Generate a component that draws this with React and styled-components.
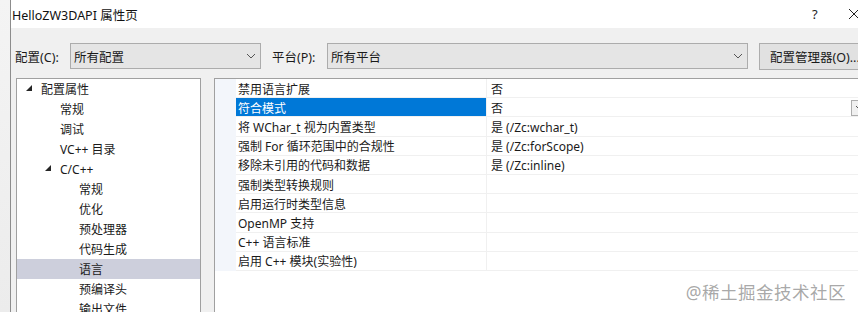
import React from 'react';
import styled, { createGlobalStyle } from 'styled-components';

const GlobalStyle = createGlobalStyle`
    html, body {
        margin: 0;
        padding: 0;
        width: 858px;
        height: 312px;
        overflow: hidden;
        background: #f0f0f0;
    }
    * {
        box-sizing: border-box;
    }
`;

const FONT = `"Noto Sans", "Noto Sans CJK SC", sans-serif`;

const treeItems = [
    { label: '配置属性', level: 0, open: true },
    { label: '常规', level: 1 },
    { label: '调试', level: 1 },
    { label: 'VC++ 目录', level: 1 },
    { label: 'C/C++', level: 1, open: true },
    { label: '常规', level: 2 },
    { label: '优化', level: 2 },
    { label: '预处理器', level: 2 },
    { label: '代码生成', level: 2 },
    { label: '语言', level: 2, selected: true },
    { label: '预编译头', level: 2 },
    { label: '输出文件', level: 2 },
];

const props = [
    { name: '禁用语言扩展', value: '否' },
    { name: '符合模式', value: '否', selected: true },
    { name: '将 WChar_t 视为内置类型', value: '是 (/Zc:wchar_t)' },
    { name: '强制 For 循环范围中的合规性', value: '是 (/Zc:forScope)' },
    { name: '移除未引用的代码和数据', value: '是 (/Zc:inline)' },
    { name: '强制类型转换规则', value: '' },
    { name: '启用运行时类型信息', value: '' },
    { name: 'OpenMP 支持', value: '' },
    { name: 'C++ 语言标准', value: '' },
    { name: '启用 C++ 模块(实验性)', value: '' },
];

const Chevron = () => (
    <svg width="10" height="6" viewBox="0 0 10 6">
        <path d="M1 1 L5 5 L9 1" fill="none" stroke="#555" strokeWidth="1" />
    </svg>
);

const Expander = () => (
    <svg width="7" height="7" viewBox="0 0 7 7">
        <polygon points="6,0 6,6 0,6" fill="#262626" />
    </svg>
);

export default function App() {
    return (
        <>
            <GlobalStyle />
            <Screen>
                <BackStrip />
                <Dialog>
                    <TitleBar>
                        <Title>HelloZW3DAPI 属性页</Title>
                        <Help>?</Help>
                        <CloseIcon>
                            <svg width="12" height="12" viewBox="0 0 12 12">
                                <path d="M1 1 L11 11 M11 1 L1 11" stroke="#222" strokeWidth="1" />
                            </svg>
                        </CloseIcon>
                    </TitleBar>
                    <Body>
                        <ConfigRow>
                            <Label>配置(C):</Label>
                            <Select width={191}>
                                <span>所有配置</span>
                                <Chevron />
                            </Select>
                            <Label gap={11}>平台(P):</Label>
                            <Select width={421}>
                                <span>所有平台</span>
                                <Chevron />
                            </Select>
                            <ManagerButton>配置管理器(O)...</ManagerButton>
                        </ConfigRow>
                        <Panels>
                            <Tree>
                                {treeItems.map((item, i) => (
                                    <TreeRow key={i} level={item.level} selected={item.selected}>
                                        <ExpanderSlot>{item.open && <Expander />}</ExpanderSlot>
                                        {item.label}
                                    </TreeRow>
                                ))}
                            </Tree>
                            <Grid>
                                {props.map((p, i) => (
                                    <GridRow key={i}>
                                        <Gutter />
                                        <NameCell selected={p.selected}>{p.name}</NameCell>
                                        <ValueCell>
                                            {p.value}
                                            {p.selected && (
                                                <DropButton>
                                                    <Chevron />
                                                </DropButton>
                                            )}
                                        </ValueCell>
                                    </GridRow>
                                ))}
                            </Grid>
                        </Panels>
                        <Watermark>@稀土掘金技术社区</Watermark>
                    </Body>
                </Dialog>
            </Screen>
        </>
    );
}

const Screen = styled.div`
    display: flex;
    width: 858px;
    height: 312px;
    overflow: hidden;
    font-family: ${FONT};
    font-size: 12px;
    color: #1a1a1a;
`;

const BackStrip = styled.div`
    width: 11px;
    flex-shrink: 0;
    background: linear-gradient(to bottom, #f4f4f4, #ececec);
    border-right: 1px solid #8c8c8c;
`;

const Dialog = styled.div`
    flex: 1;
    display: flex;
    flex-direction: column;
    min-width: 0;
`;

const TitleBar = styled.div`
    height: 28px;
    background: #ffffff;
    display: flex;
    align-items: center;
    padding-left: 1px;
`;

const Title = styled.div`
    flex: 1;
    font-size: 12.5px;
    color: #111;
`;

const Help = styled.div`
    width: 20px;
    font-size: 13px;
    color: #222;
    margin-right: 16px;
`;

const CloseIcon = styled.div`
    width: 12px;
    display: flex;
    align-items: center;
    margin-right: -2px;
`;

const Body = styled.div`
    flex: 1;
    position: relative;
    background: #f0f0f0;
    padding: 15px 0 0 4px;
    overflow: hidden;
`;

const ConfigRow = styled.div`
    display: flex;
    align-items: center;
    height: 26px;
    white-space: nowrap;
`;

const Label = styled.div`
    width: 55px;
    flex-shrink: 0;
    margin-left: ${(p) => p.gap || 0}px;
    font-size: 12.5px;
`;

const Select = styled.div`
    width: ${(p) => p.width}px;
    height: 26px;
    flex-shrink: 0;
    background: #e5e5e5;
    border: 1px solid #acacac;
    display: flex;
    align-items: center;
    justify-content: space-between;
    padding: 0 4px 0 3px;
    font-size: 12.5px;
`;

const ManagerButton = styled.div`
    margin-left: 11px;
    height: 27px;
    width: 110px;
    flex-shrink: 0;
    background: #e1e1e1;
    border: 1px solid #adadad;
    display: flex;
    align-items: center;
    padding-left: 10px;
    font-size: 12.5px;
`;

const Panels = styled.div`
    display: flex;
    margin-top: 9px;
    margin-left: 1px;
    gap: 13px;
    align-items: flex-start;
`;

const Tree = styled.div`
    width: 185px;
    height: 260px;
    flex-shrink: 0;
    background: #ffffff;
    border: 1px solid #a0a0a0;
    border-bottom: none;
`;

const TreeRow = styled.div`
    height: 20px;
    display: flex;
    align-items: center;
    padding-left: ${(p) => 9 + p.level * 19}px;
    background: ${(p) => (p.selected ? '#cdcfdc' : 'transparent')};
`;

const ExpanderSlot = styled.span`
    width: 15px;
    display: inline-flex;
    align-items: center;
    justify-content: flex-start;
    margin-top: -2px;
`;

const Grid = styled.div`
    width: 680px;
    height: 260px;
    flex-shrink: 0;
    background: #ffffff;
    border-top: 1px solid #a0a0a0;
    border-left: 1px solid #a0a0a0;
`;

const GridRow = styled.div`
    display: flex;
    height: 19.2px;
`;

const Gutter = styled.div`
    width: 21px;
    background: #f3f6fb;
`;

const NameCell = styled.div`
    width: 251px;
    padding: 1px 0 0 2px;
    display: flex;
    align-items: center;
    border-bottom: 1px solid #f0f0f0;
    border-right: 1px solid #f0f0f0;
    background: ${(p) => (p.selected ? '#0078d7' : '#ffffff')};
    color: ${(p) => (p.selected ? '#ffffff' : '#1a1a1a')};
    white-space: nowrap;
`;

const ValueCell = styled.div`
    flex: 1;
    position: relative;
    padding: 1px 0 0 4px;
    display: flex;
    align-items: center;
    border-bottom: 1px solid #f0f0f0;
    white-space: nowrap;
`;

const DropButton = styled.div`
    position: absolute;
    left: 364px;
    top: 2px;
    width: 18px;
    height: 16px;
    background: #f0f0f0;
    border: 1px solid #adadad;
    display: flex;
    align-items: center;
    justify-content: center;
`;

const Watermark = styled.div`
    position: absolute;
    right: 12px;
    bottom: 8px;
    font-size: 17.5px;
    color: rgba(130, 130, 130, 0.7);
    letter-spacing: 0.5px;
`;
